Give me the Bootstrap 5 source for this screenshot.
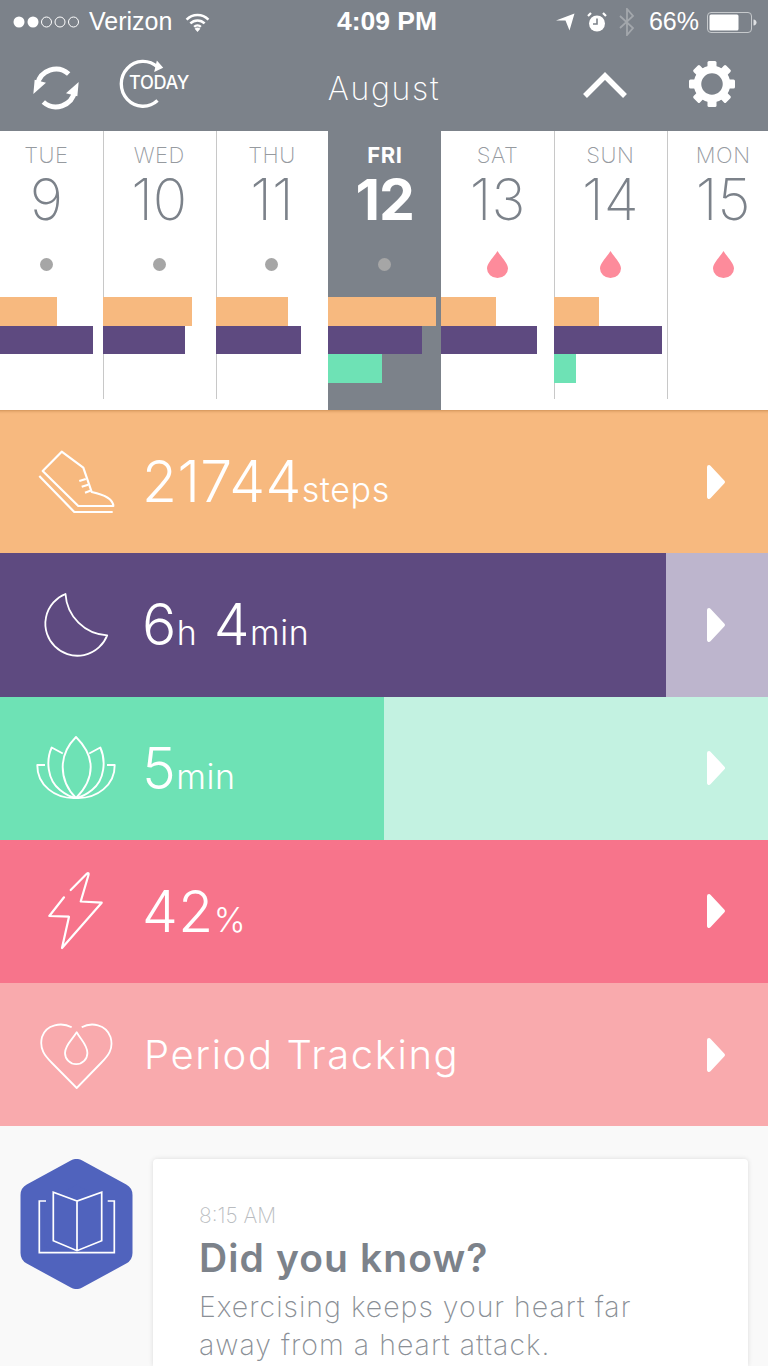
<!DOCTYPE html>
<html lang="en">

<head>
    <meta charset="UTF-8">
    <title>Daily Summary</title>
    <meta name="viewport" content="width=device-width, initial-scale=1" />
    <link href="https://cdn.jsdelivr.net/npm/bootstrap@5.3.0/dist/css/bootstrap.min.css" rel="stylesheet">
    <style>
        html, body {
            height: 1366px;
            overflow: hidden;
        }

        body {
            background: #f9f9f9;
            font-family: "Inter", "Liberation Sans", sans-serif;
        }

        svg {
            display: block;
        }

        .top-area {
            background: #7c828a;
            color: #fff;
            height: 131px;
        }

        .status-bar {
            height: 44px;
            padding: 0 11px 0 13px;
            font-family: "Liberation Sans", sans-serif;
            font-size: 25px;
        }

        .status-carrier {
            margin: 0 13px 0 6px;
        }

        .status-time {
            font-weight: 700;
            font-size: 26.5px;
            margin-left: 3px;
        }

        .status-alarm { margin-left: 12px; }
        .status-bt { margin-left: 12px; }
        .status-pct { margin-left: 14px; }
        .status-batt { margin-left: 8px; }

        .nav-bar {
            height: 87px;
            padding: 0 32px;
            display: grid;
            grid-template-columns: 1fr auto 1fr;
        }

        .month-name {
            font-weight: 200;
            font-size: 32px;
            letter-spacing: 1.7px;
            padding-top: 2px;
        }

        .today-icon {
            margin-left: 34px;
            margin-bottom: 10px;
        }

        .up-icon {
            margin-bottom: 6px;
        }

        .gear-icon {
            margin-left: 60px;
            margin-bottom: 8px;
        }

        .week-strip {
            display: grid;
            grid-template-columns: repeat(7, 1fr);
            width: 789.6px;
            margin-left: -10px;
            height: 279px;
            background: #fff;
        }

        .day-cell {
            position: relative;
            text-align: center;
        }

        .day-cell::before {
            content: "";
            position: absolute;
            left: 0;
            top: 0;
            width: 1px;
            height: 268px;
            background: #c8c8c8;
        }

        .day-cell.first-day::before,
        .day-cell.today-cell::before,
        .day-cell.after-today::before {
            display: none;
        }

        .day-name {
            margin-top: 9px;
            line-height: 30px;
            font-size: 22px;
            font-weight: 200;
            letter-spacing: .5px;
            color: #969a9f;
        }

        .day-num {
            line-height: 60px;
            font-size: 57px;
            font-weight: 200;
            color: #7c828a;
        }

        .today-cell {
            background: #7c828a;
        }

        .today-cell .day-name,
        .today-cell .day-num {
            color: #fff;
            font-weight: 700;
        }

        .today-cell .day-num {
            letter-spacing: -1px;
        }

        .day-marker {
            height: 30px;
            margin-top: 19px;
            display: flex;
            align-items: center;
            justify-content: center;
        }

        .marker-dot {
            width: 13px;
            height: 13px;
            border-radius: 50%;
            background: #a6a6a6;
        }

        .day-bars {
            margin-top: 18px;
        }

        .day-bar {
            position: relative;
            height: 28.5px;
        }

        .bar-steps { background: #f7b97f; }
        .bar-sleep { background: #5e4a80; }
        .bar-calm { background: #6ee2b5; }

        .metric-row {
            height: 143.25px;
            color: #fff;
            display: flex;
            align-items: center;
            font-weight: 350;
            font-size: 57px;
            line-height: 1;
            letter-spacing: .4px;
        }

        .metric-icon {
            width: 142px;
            flex: none;
            display: flex;
            justify-content: center;
            padding-left: 10px;
        }

        .metric-text {
            flex: 1;
        }

        .metric-unit {
            font-size: 34px;
            font-weight: 300;
            letter-spacing: .6px;
        }

        .metric-go {
            margin-right: 42px;
        }

        .metric-steps {
            background: #f7b97f;
            box-shadow: inset 0 4px 3px -3px rgba(150, 90, 30, .45);
        }

        .metric-sleep {
            background: linear-gradient(to right, #5e4a80 666px, #bdb5cd 666px);
        }

        .metric-calm {
            background: linear-gradient(to right, #6ee2b5 384px, #c3f2e1 384px);
        }

        .metric-energy {
            background: #f7748b;
        }

        .metric-period {
            background: #f9aaad;
            font-size: 40px;
            font-weight: 300;
            letter-spacing: 1.6px;
        }

        .metric-period .metric-text {
            padding-left: 2px;
        }

        .feed-area {
            padding: 33px 20px 0;
        }

        .feed-badge {
            width: 113px;
            flex: none;
        }

        .feed-card {
            width: 595px;
            height: 206.75px;
            margin-left: 20px;
            background: #fff;
            border-radius: 4px 4px 0 0;
            box-shadow: 0 0 5px rgba(0, 0, 0, .12);
            padding: 44px 46px 0;
        }

        .feed-time {
            font-size: 21px;
            font-weight: 200;
            color: #b9bcc0;
            line-height: 26px;
        }

        .feed-title {
            font-size: 39px;
            font-weight: 600;
            letter-spacing: 1.1px;
            color: #7c828a;
            margin: 5px 0 6px;
            line-height: 48px;
        }

        .feed-body {
            font-size: 28.5px;
            font-weight: 200;
            color: #8a8f96;
            line-height: 38px;
            letter-spacing: 1px;
        }
    </style>
</head>

<body>
    <div class="top-area">
        <div class="status-bar d-flex align-items-center position-relative">
            <svg width="70" height="14" viewBox="0 0 70 14">
                <circle cx="6" cy="7" r="5.5" fill="#fff" />
                <circle cx="20" cy="7" r="5.5" fill="#fff" />
                <circle cx="33.5" cy="7" r="5" fill="none" stroke="#fff" />
                <circle cx="47" cy="7" r="5" fill="none" stroke="#fff" />
                <circle cx="60.5" cy="7" r="5" fill="none" stroke="#fff" />
            </svg>
            <span class="status-carrier">Verizon</span>
            <svg width="25" height="19" viewBox="0 0 26 20" fill="none" stroke="#fff" stroke-width="2.6">
                <path d="M1.5 7a16 16 0 0 1 23 0" />
                <path d="M5.5 11a10.5 10.5 0 0 1 15 0" />
                <path d="M9.5 14.5a5 5 0 0 1 7 0" />
                <path d="M13 20l-3-3.5a4 4 0 0 1 6 0z" fill="#fff" stroke="none" />
            </svg>
            <span class="status-time position-absolute top-50 start-50 translate-middle">4:09 PM</span>
            <div class="ms-auto d-flex align-items-center">
                <svg width="19" height="18" viewBox="0 0 19 18"><path d="M18.500 0.500L0 7.500H9.500L13.500 17.500z" fill="#fff" /></svg>
                <svg class="status-alarm" width="20" height="20" viewBox="0 0 20 20">
                    <circle cx="10" cy="11.500" r="8" fill="#fff" />
                    <path d="M10 6.500V12H6" fill="none" stroke="#7c828a" stroke-width="1.600" />
                    <path d="M1 4l3-3M19 4l-3-3" stroke="#fff" stroke-width="2.200" />
                </svg>
                <svg class="status-bt" width="16" height="28" viewBox="0 0 16 28" fill="none" stroke="#a3a7ac" stroke-width="1.800">
                    <path d="M1 8l13 12-6 7V1l6 7L1 20" />
                </svg>
                <span class="status-pct">66%</span>
                <svg class="status-batt" width="50" height="21" viewBox="0 0 50 21">
                    <rect x=".5" y=".5" width="44" height="20" rx="3.500" fill="none" stroke="#c6c9cc" />
                    <rect x="2.500" y="2.500" width="29" height="16" rx="1.500" fill="#fff" />
                    <path d="M46.500 7.500c2 0 3 1.500 3 3s-1 3-3 3z" fill="#dfe1e3" />
                </svg>
            </div>
        </div>
        <div class="nav-bar align-items-center">
            <div class="d-flex align-items-center">
                <svg width="48" height="44" viewBox="36 44 144 132" fill="none" stroke="#fff" stroke-width="15">
                    <path d="M146 68A57 57 0 0 0 52 100" />
                    <path d="M70 152A57 57 0 0 0 164 120" />
                    <path d="M40 128L44 85L78 94z" fill="#fff" stroke="none" />
                    <path d="M176 92L172 135L138 126z" fill="#fff" stroke="none" />
                </svg>
                <svg class="today-icon" width="77" height="52" viewBox="290 20 230 155" fill="none" stroke="#fff" stroke-width="10">
                    <path d="M420 50A65 67 0 1 0 420 150" />
                    <path d="M418 30L437 52L410 65z" fill="#fff" stroke="none" />
                    <text x="335" y="116" fill="#fff" stroke="none" font-family="Inter, sans-serif" font-size="54" font-weight="500" letter-spacing="-1">TODAY</text>
                </svg>
            </div>
            <div class="month-name">August</div>
            <div class="d-flex align-items-center justify-content-end">
                <svg class="up-icon" width="46" height="28" viewBox="0 0 46 28" fill="none" stroke="#fff" stroke-width="5.500">
                    <path d="M3 25L23 5l20 20" />
                </svg>
                <svg class="gear-icon" width="48" height="48" viewBox="0 0 48 48">
                    <circle cx="24" cy="24" r="14.500" fill="none" stroke="#fff" stroke-width="7.500" />
                    <g fill="#fff">
                        <rect x="19.500" y="1" width="9" height="8" rx="1.500" />
                        <rect x="19.500" y="1" width="9" height="8" rx="1.500" transform="rotate(45 24 24)" />
                        <rect x="19.500" y="1" width="9" height="8" rx="1.500" transform="rotate(90 24 24)" />
                        <rect x="19.500" y="1" width="9" height="8" rx="1.500" transform="rotate(135 24 24)" />
                        <rect x="19.500" y="1" width="9" height="8" rx="1.500" transform="rotate(180 24 24)" />
                        <rect x="19.500" y="1" width="9" height="8" rx="1.500" transform="rotate(225 24 24)" />
                        <rect x="19.500" y="1" width="9" height="8" rx="1.500" transform="rotate(270 24 24)" />
                        <rect x="19.500" y="1" width="9" height="8" rx="1.500" transform="rotate(315 24 24)" />
                    </g>
                </svg>
            </div>
        </div>
    </div>

    <div class="week-strip">
        <div class="day-cell first-day">
            <div class="day-name">TUE</div>
            <div class="day-num">9</div>
            <div class="day-marker"><div class="marker-dot"></div></div>
            <div class="day-bars">
                <div class="day-bar bar-steps" style="width: 67px"></div>
                <div class="day-bar bar-sleep" style="width: 103px"></div>
            </div>
        </div>
        <div class="day-cell">
            <div class="day-name">WED</div>
            <div class="day-num">10</div>
            <div class="day-marker"><div class="marker-dot"></div></div>
            <div class="day-bars">
                <div class="day-bar bar-steps" style="width: 89px"></div>
                <div class="day-bar bar-sleep" style="width: 82px"></div>
            </div>
        </div>
        <div class="day-cell">
            <div class="day-name">THU</div>
            <div class="day-num">11</div>
            <div class="day-marker"><div class="marker-dot"></div></div>
            <div class="day-bars">
                <div class="day-bar bar-steps" style="width: 72px"></div>
                <div class="day-bar bar-sleep" style="width: 85px"></div>
            </div>
        </div>
        <div class="day-cell today-cell">
            <div class="day-name">FRI</div>
            <div class="day-num">12</div>
            <div class="day-marker"><div class="marker-dot"></div></div>
            <div class="day-bars">
                <div class="day-bar bar-steps" style="width: 108px"></div>
                <div class="day-bar bar-sleep" style="width: 94px"></div>
                <div class="day-bar bar-calm" style="width: 54px"></div>
            </div>
        </div>
        <div class="day-cell after-today">
            <div class="day-name">SAT</div>
            <div class="day-num">13</div>
            <div class="day-marker">
                <svg width="21" height="27" viewBox="0 0 21 27"><path d="M10.500 0C7 6 0 12 0 17.500a10.500 9.500 0 0 0 21 0C21 12 14 6 10.500 0z" fill="#fd8b9b" /></svg>
            </div>
            <div class="day-bars">
                <div class="day-bar bar-steps" style="width: 55px"></div>
                <div class="day-bar bar-sleep" style="width: 96px"></div>
            </div>
        </div>
        <div class="day-cell">
            <div class="day-name">SUN</div>
            <div class="day-num">14</div>
            <div class="day-marker">
                <svg width="21" height="27" viewBox="0 0 21 27"><path d="M10.500 0C7 6 0 12 0 17.500a10.500 9.500 0 0 0 21 0C21 12 14 6 10.500 0z" fill="#fd8b9b" /></svg>
            </div>
            <div class="day-bars">
                <div class="day-bar bar-steps" style="width: 45px"></div>
                <div class="day-bar bar-sleep" style="width: 108px"></div>
                <div class="day-bar bar-calm" style="width: 22px"></div>
            </div>
        </div>
        <div class="day-cell">
            <div class="day-name">MON</div>
            <div class="day-num">15</div>
            <div class="day-marker">
                <svg width="21" height="27" viewBox="0 0 21 27"><path d="M10.500 0C7 6 0 12 0 17.500a10.500 9.500 0 0 0 21 0C21 12 14 6 10.500 0z" fill="#fd8b9b" /></svg>
            </div>
        </div>
    </div>

    <div class="metric-row metric-steps">
        <div class="metric-icon">
            <svg width="78" height="66" viewBox="37 448 78 66" fill="none" stroke="#fff" stroke-width="2.200" stroke-linejoin="round">
                <path d="M61.700 450.700L42.700 470L78.300 505H113.300C113 498 106 494 91.700 491L83.300 466.700z" />
                <path d="M39.300 475L74.300 511H112.700" />
                <path d="M79.300 480l6.500-2M81.700 485.700l6.500-2M85 491.700l6.500-2.500" />
            </svg>
        </div>
        <div class="metric-text">21744<span class="metric-unit">steps</span></div>
        <svg class="metric-go" width="20" height="36" viewBox="0 0 20 36"><path d="M3 3L17 18L3 33z" fill="#fff" stroke="#fff" stroke-width="4" stroke-linejoin="round" /></svg>
    </div>

    <div class="metric-row metric-sleep">
        <div class="metric-icon">
            <svg width="66" height="68" viewBox="42.500 590 66 68" fill="none" stroke="#fff" stroke-width="1.800" stroke-linejoin="round">
                <path d="M65 593A32 32 0 1 0 106.700 634.300A44 44 0 0 1 65 593z" />
            </svg>
        </div>
        <div class="metric-text">6<span class="metric-unit">h</span> 4<span class="metric-unit">min</span></div>
        <svg class="metric-go" width="20" height="36" viewBox="0 0 20 36"><path d="M3 3L17 18L3 33z" fill="#fff" stroke="#fff" stroke-width="4" stroke-linejoin="round" /></svg>
    </div>

    <div class="metric-row metric-calm">
        <div class="metric-icon">
            <svg width="80" height="66" viewBox="36 735 80 66" fill="none" stroke="#fff" stroke-width="1.900" stroke-linejoin="round">
                <path d="M76 737C68 745 62.700 755 62.700 767C62.700 780 68 790 76 798C84 790 90.700 780 90.700 767C90.700 755 84 745 76 737z" />
                <path d="M62.800 753.500L51.700 747.500C46 760 47 780 60 790C65 794 70 797 76 798C82 797 87 794 92 790C105 780 106 760 100.300 747.500L89.200 753.500" />
                <path d="M45 765H37.300C37 785 55 799 76 798C97 799 115 785 114.700 765H107" />
            </svg>
        </div>
        <div class="metric-text">5<span class="metric-unit">min</span></div>
        <svg class="metric-go" width="20" height="36" viewBox="0 0 20 36"><path d="M3 3L17 18L3 33z" fill="#fff" stroke="#fff" stroke-width="4" stroke-linejoin="round" /></svg>
    </div>

    <div class="metric-row metric-energy">
        <div class="metric-icon">
            <svg width="58" height="80" viewBox="47 871 58 80" fill="none" stroke="#fff" stroke-width="2.200" stroke-linecap="round" stroke-linejoin="round">
                <path d="M70.700 890L87 873.500C88.300 872.500 89 873.500 88.500 875L80.700 901.500L101.700 902.700L62 948L69 916.700L49.300 916L64 897.300" />
            </svg>
        </div>
        <div class="metric-text">42<span class="metric-unit">%</span></div>
        <svg class="metric-go" width="20" height="36" viewBox="0 0 20 36"><path d="M3 3L17 18L3 33z" fill="#fff" stroke="#fff" stroke-width="4" stroke-linejoin="round" /></svg>
    </div>

    <div class="metric-row metric-period">
        <div class="metric-icon">
            <svg width="74" height="70" viewBox="39 1021 74 70" fill="none" stroke="#fff" stroke-width="1.800" stroke-linejoin="round">
                <path d="M71.700 1028.300C62 1023 46 1025 42 1038C39 1050 45 1057 52 1064L76.700 1089L101 1064C108 1057 114 1050 110.500 1038C106 1025 91 1023 81.700 1028.300" />
                <path d="M76.700 1033.300C72 1041 65 1046 65 1054A11.200 11.200 0 0 0 87.400 1054C87.400 1046 81 1041 76.700 1033.300z" />
            </svg>
        </div>
        <div class="metric-text">Period Tracking</div>
        <svg class="metric-go" width="20" height="36" viewBox="0 0 20 36"><path d="M3 3L17 18L3 33z" fill="#fff" stroke="#fff" stroke-width="4" stroke-linejoin="round" /></svg>
    </div>

    <div class="feed-area d-flex align-items-start">
        <svg class="feed-badge" width="113" height="130" viewBox="0 0 113 130">
            <path d="M56.500 12L100.500 36V94L56.500 118L12.500 94V36z" fill="#5063bd" stroke="#5063bd" stroke-width="24" stroke-linejoin="round" />
            <g transform="translate(-20 -1159)" fill="none" stroke="#fff" stroke-width="1.700">
                <path d="M77 1201V1250.700M77 1201L53.300 1192.300V1240.700L77 1250.700L101.700 1240.700V1192.300z" />
                <path d="M46 1201H39.300V1252.700H114.300V1201H107.700" />
            </g>
        </svg>
        <div class="feed-card">
            <div class="feed-time">8:15 AM</div>
            <div class="feed-title">Did you know?</div>
            <div class="feed-body">Exercising keeps your heart far<br>away from a heart attack.</div>
        </div>
    </div>

    <script src="https://cdn.jsdelivr.net/npm/bootstrap@5.3.0/dist/js/bootstrap.bundle.min.js"></script>
</body>

</html>
